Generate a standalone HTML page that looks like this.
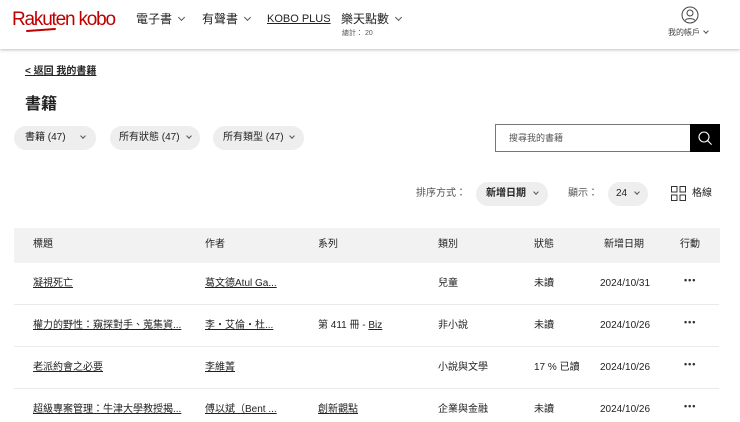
<!DOCTYPE html>
<html><head><meta charset="utf-8"><style>
*{margin:0;padding:0;box-sizing:border-box}
body{width:740px;height:422px;overflow:hidden;background:#fff;font-family:"Liberation Sans","Noto Sans CJK TC",sans-serif;color:#222;position:relative}
.a{position:absolute;white-space:nowrap}
.hdr{position:absolute;left:0;top:0;width:740px;height:49px;background:#fff;box-shadow:0 1px 3px rgba(0,0,0,.25)}
.chip{position:absolute;background:#eee;border-radius:12px;height:24px;font-size:10px;line-height:24px;padding-left:11px}
.chev{display:inline-block;width:5px;height:5px;border-right:1px solid #555;border-bottom:1px solid #555;transform:rotate(45deg)}
.th{position:absolute;top:238px;font-size:10px;line-height:14px;color:#222}
.td{position:absolute;font-size:10px;line-height:14px;color:#222}
.u{text-decoration:underline}
.line{position:absolute;left:14px;width:705px;height:1px;background:#eaeaea}
.dots{position:absolute;left:684px;font-size:9px;letter-spacing:1px;font-weight:bold;color:#333}
</style></head><body>
<div class="hdr"></div>
<div class="a" style="left:12px;top:9px;font-size:19px;line-height:22px;color:#bf0000;letter-spacing:-1.2px">Rakuten kobo</div>
<div class="a" style="left:26px;top:29px;width:30px;height:2px;background:#bf0000;border-radius:2px;transform:rotate(-4deg)"></div>
<div class="a" style="left:136px;top:11px;font-size:12px;line-height:16px">電子書 <span class="chev" style="margin-left:4px;position:relative;top:-3px"></span></div>
<div class="a" style="left:202px;top:11px;font-size:12px;line-height:16px">有聲書 <span class="chev" style="margin-left:4px;position:relative;top:-3px"></span></div>
<div class="a u" style="left:267px;top:11px;font-size:11px;line-height:16px">KOBO PLUS</div>
<div class="a" style="left:341px;top:11px;font-size:12px;line-height:16px">樂天點數 <span class="chev" style="margin-left:4px;position:relative;top:-3px"></span></div>
<div class="a" style="left:342px;top:29px;font-size:7px;line-height:10px;color:#555">總計： 20</div>
<svg class="a" style="left:681px;top:6px" width="18" height="18" viewBox="0 0 18 18" fill="none" stroke="#444" stroke-width="1"><circle cx="9" cy="9" r="8"/><circle cx="9" cy="7" r="3"/><path d="M4 14.5c1.5-2.5 8.5-2.5 10 0"/></svg>
<div class="a" style="left:668px;top:28px;font-size:8px;line-height:10px;color:#444">我的帳戶 <span class="chev" style="width:4px;height:4px;position:relative;top:-2px;margin-left:2px"></span></div>

<div class="a u" style="left:25px;top:65px;font-size:10px;line-height:14px;font-weight:bold">&lt; 返回 我的書籍</div>
<div class="a" style="left:25px;top:95px;font-size:16px;line-height:20px;font-weight:bold">書籍</div>
<div class="chip" style="left:14px;top:126px;width:82px">書籍 (47)<span class="chev" style="position:absolute;left:67px;top:8px;width:4px;height:4px"></span></div>
<div class="chip" style="left:110px;top:126px;width:90px;padding-left:9px">所有狀態 (47)<span class="chev" style="position:absolute;left:77px;top:8px;width:4px;height:4px"></span></div>
<div class="chip" style="left:213px;top:126px;width:91px;padding-left:10px">所有類型 (47)<span class="chev" style="position:absolute;left:77px;top:8px;width:4px;height:4px"></span></div>

<div class="a" style="left:495px;top:124px;width:196px;height:28px;border:1px solid #777;font-size:9px;color:#555;line-height:26px;padding-left:13px">搜尋我的書籍</div>
<div class="a" style="left:690px;top:124px;width:30px;height:28px;background:#000"></div>
<svg class="a" style="left:697px;top:130px" width="16" height="16" viewBox="0 0 16 16" fill="none" stroke="#fff" stroke-width="1.1"><circle cx="7" cy="7" r="5"/><path d="M10.6 10.6l4 4"/></svg>

<div class="a" style="left:416px;top:187px;font-size:10px;line-height:14px;color:#555">排序方式：</div>
<div class="chip" style="left:476px;top:182px;width:72px;padding-left:10px;font-weight:bold">新增日期<span class="chev" style="position:absolute;left:58px;top:8px;width:4px;height:4px"></span></div>
<div class="a" style="left:568px;top:187px;font-size:10px;line-height:14px;color:#555">顯示：</div>
<div class="chip" style="left:608px;top:182px;width:40px;padding-left:8px">24<span class="chev" style="position:absolute;left:27px;top:8px;width:4px;height:4px"></span></div>
<svg class="a" style="left:671px;top:186px" width="15" height="15" viewBox="0 0 15 15" fill="none" stroke="#333" stroke-width="1"><rect x="0.5" y="0.5" width="5.5" height="5.5"/><rect x="9" y="0.5" width="5.5" height="5.5"/><rect x="0.5" y="9" width="5.5" height="5.5"/><rect x="9" y="9" width="5.5" height="5.5"/></svg>
<div class="a" style="left:692px;top:187px;font-size:10px;line-height:14px">格線</div>

<div class="a" style="left:14px;top:228px;width:706px;height:35px;background:#f2f2f2"></div>
<div class="th" style="left:33px">標題</div>
<div class="th" style="left:205px">作者</div>
<div class="th" style="left:318px">系列</div>
<div class="th" style="left:438px">類別</div>
<div class="th" style="left:534px">狀態</div>
<div class="th" style="left:604px">新增日期</div>
<div class="th" style="left:680px">行動</div>

<div class="td u" style="left:33px;top:277px">凝視死亡</div>
<div class="td u" style="left:205px;top:277px">葛文德Atul Ga...</div>
<div class="td" style="left:438px;top:277px">兒童</div>
<div class="td" style="left:534px;top:277px">未讀</div>
<div class="td" style="left:600px;top:277px">2024/10/31</div>
<div class="dots" style="top:275px">•••</div>
<div class="line" style="top:304px"></div>

<div class="td u" style="left:33px;top:319px">權力的野性：窺探對手、蒐集資...</div>
<div class="td u" style="left:205px;top:319px">李・艾倫・杜...</div>
<div class="td" style="left:318px;top:319px">第 411 冊 - <span class="u">Biz</span></div>
<div class="td" style="left:438px;top:319px">非小說</div>
<div class="td" style="left:534px;top:319px">未讀</div>
<div class="td" style="left:600px;top:319px">2024/10/26</div>
<div class="dots" style="top:317px">•••</div>
<div class="line" style="top:346px"></div>

<div class="td u" style="left:33px;top:361px">老派約會之必要</div>
<div class="td u" style="left:205px;top:361px">李維菁</div>
<div class="td" style="left:438px;top:361px">小說與文學</div>
<div class="td" style="left:534px;top:361px">17 % 已讀</div>
<div class="td" style="left:600px;top:361px">2024/10/26</div>
<div class="dots" style="top:359px">•••</div>
<div class="line" style="top:388px"></div>

<div class="td u" style="left:33px;top:403px">超級專案管理：牛津大學教授揭...</div>
<div class="td u" style="left:205px;top:403px">傅以斌（Bent ...</div>
<div class="td u" style="left:318px;top:403px">創新觀點</div>
<div class="td" style="left:438px;top:403px">企業與金融</div>
<div class="td" style="left:534px;top:403px">未讀</div>
<div class="td" style="left:600px;top:403px">2024/10/26</div>
<div class="dots" style="top:401px">•••</div>
</body></html>
